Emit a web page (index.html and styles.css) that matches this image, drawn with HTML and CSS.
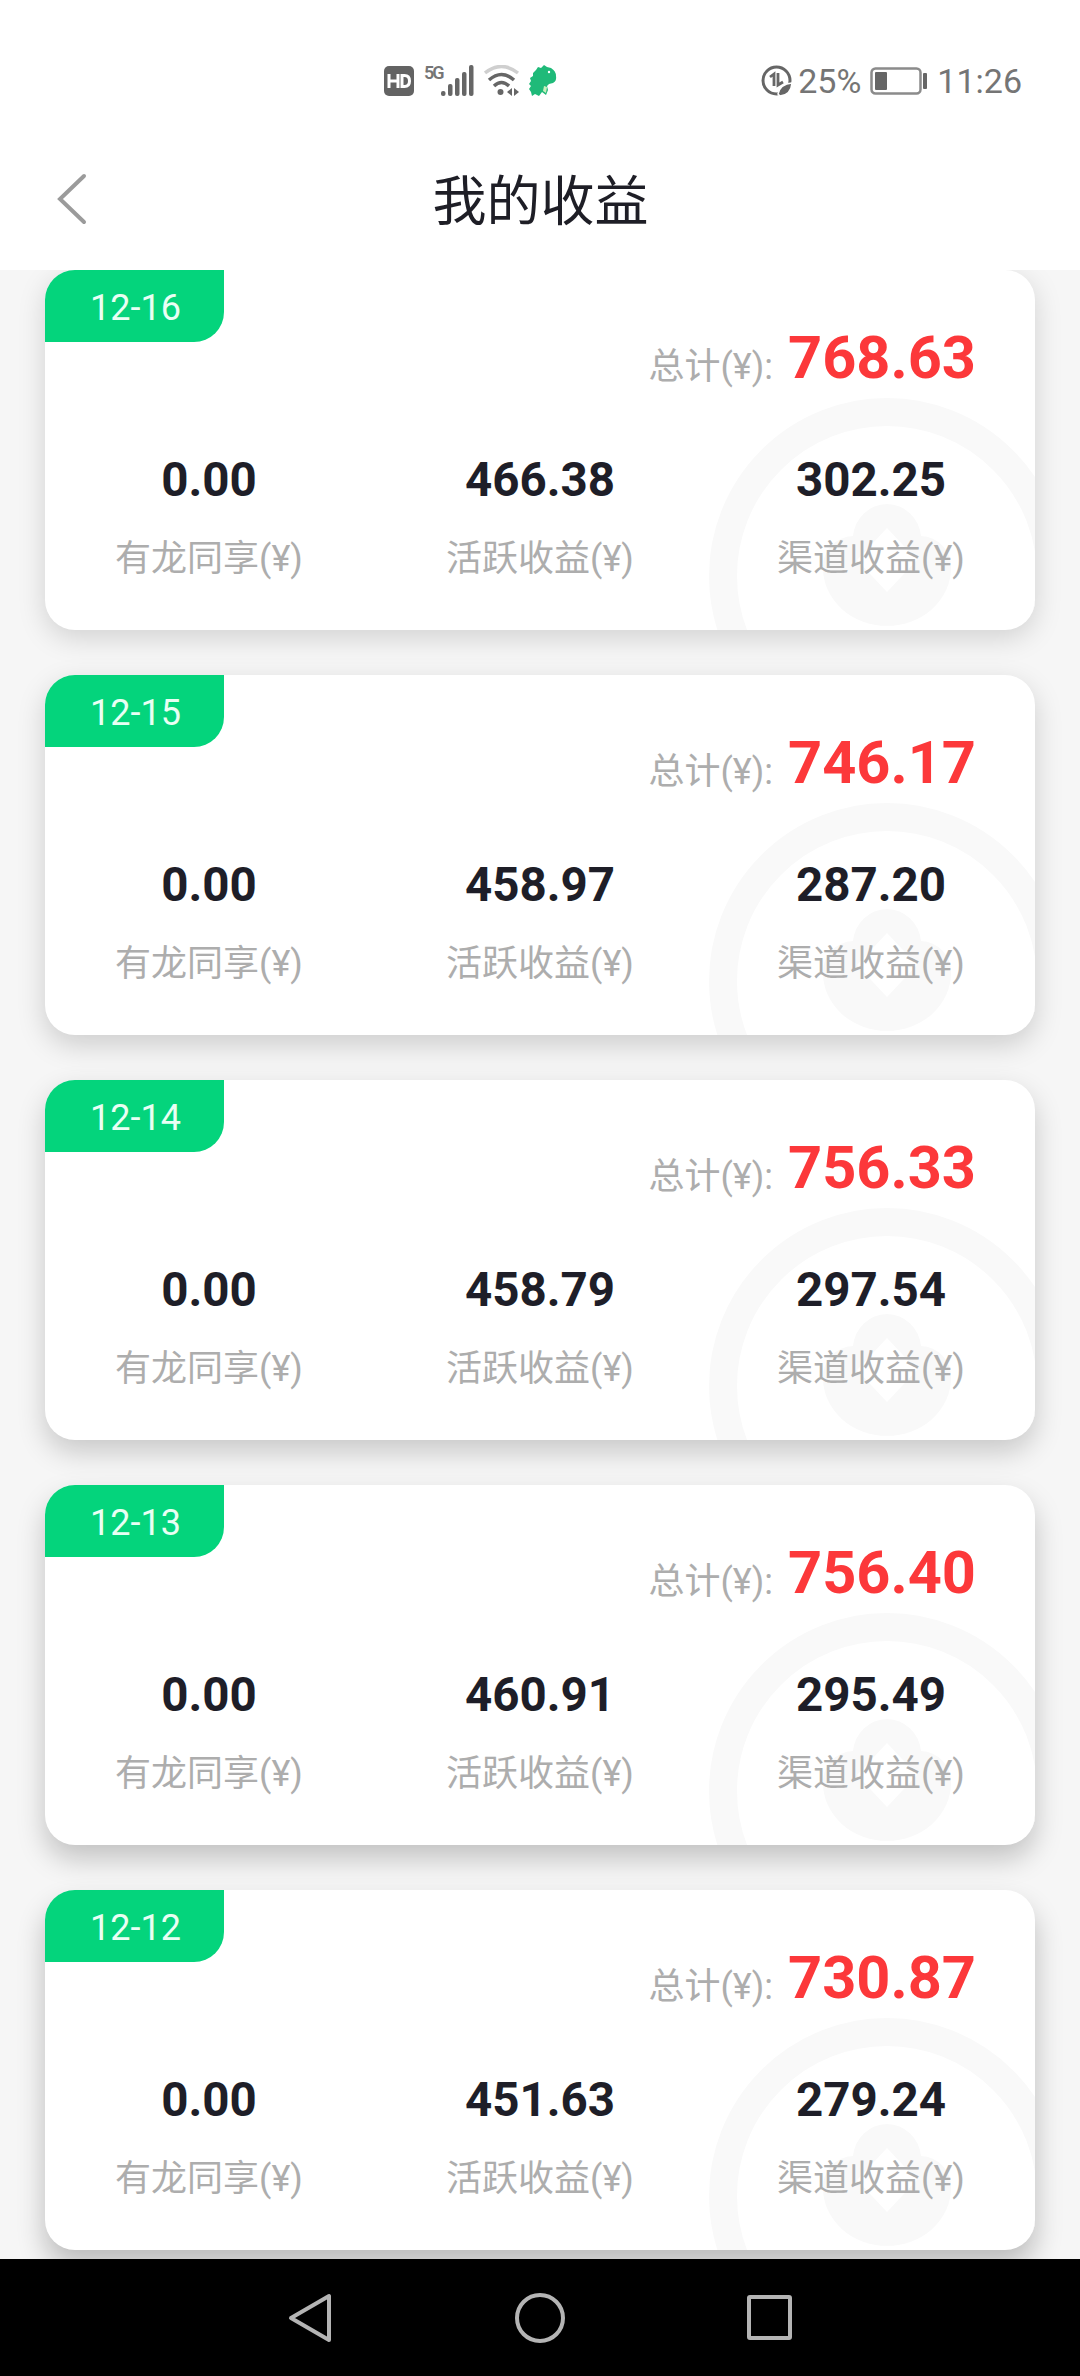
FILE: index.html
```html
<!DOCTYPE html>
<html lang="zh-CN">
<head>
  <meta charset="UTF-8" />
  <meta name="viewport" content="width=device-width, initial-scale=1.0" />
  <title>我的收益</title>
  <link rel="stylesheet" href="styles.css">
</head>
<body>
  <!-- Coin watermark shared by the cards -->
  <svg class="defs" width="0" height="0">
    <symbol id="coin" viewBox="0 0 328 234">
      <circle cx="180" cy="180" r="164" fill="none" stroke="#f9f9f9" stroke-width="28" />
      <path fill="#f9f9f9" fill-rule="evenodd" d="M180 108a35 35 0 0 1 34 32a31 31 0 0 1 30 32a62 56 0 0 1-128 0a31 31 0 0 1 30-32a35 35 0 0 1 34-32zM180 132l-30 32 30 32 30-32z" />
    </symbol>
  </svg>

  <div class="phone">
    <!-- Status bar -->
    <div class="status-bar">
      <div class="status-left">
        <svg class="icon-hd" width="30" height="30" viewBox="0 0 30 30">
          <rect width="30" height="30" rx="5" fill="#636363" />
          <path d="M5 8v14M14 8v14M5 15h9M18 9.500h2.500q5 0 5 5.500t-5 5.500H18z" fill="none" stroke="#fff" stroke-width="3" />
        </svg>
        <span class="net">5G</span>
        <svg class="icon-signal" width="33" height="32" viewBox="0 0 33 32" fill="#666">
          <rect x="0" y="26" width="4.500" height="5" rx="2" />
          <rect x="7" y="19" width="4.500" height="12" rx="2" />
          <rect x="14" y="13" width="4.500" height="18" rx="2" />
          <rect x="21" y="7" width="4.500" height="24" rx="2" />
          <rect x="28" y="0" width="4.500" height="31" rx="2" />
        </svg>
        <svg class="icon-wifi" width="36" height="32" viewBox="0 0 36 32" fill="none" stroke-width="3.500">
          <path d="M1 8Q17.500-5 34 8" stroke="#cfcfcf" />
          <path d="M5 15Q17.500 4 30 15" stroke="#666" />
          <path d="M10 21Q17.500 14 25 21" stroke="#666" />
          <circle cx="16.500" cy="27" r="3" fill="#666" />
          <path d="M28 23v8l-5-4zM30 23v8l5-4z" fill="#666" />
        </svg>
        <svg class="icon-dino" width="28" height="32" viewBox="0 0 28 32">
          <path fill="#1fba79" d="M7 5l2-3 3 1 3-3 3 2 4 1q5 3 5 8 1 5-3 7l-4 1-2 2 1 4-2 5-4-3-3 4-4-2-3 2-1-4-2-3 2-3-2-2 2-3-1-3 3-2 0-3z" />
          <circle cx="20" cy="7" r="1.200" fill="#fff" />
          <path fill="#c9efbd" d="M15 21l3 1-1 6-3-2z" />
        </svg>
      </div>
      <div class="status-right">
        <svg class="icon-data" width="32" height="32" viewBox="0 0 32 32">
          <circle cx="15.500" cy="15.500" r="13.500" fill="none" stroke="#666" stroke-width="3" />
          <path d="M9 12l4-3v12M17 8v12l5-3" fill="none" stroke="#666" stroke-width="2.800" />
          <path d="M17 29q2-10 14-11-1 12-12 13z" fill="#666" stroke="#fff" stroke-width="1.500" />
        </svg>
        <span class="percent">25%</span>
        <svg class="icon-battery" width="58" height="28" viewBox="0 0 58 28">
          <rect x="1.500" y="1.500" width="49" height="25" rx="4" fill="none" stroke="#8b8b8b" stroke-width="2.500" />
          <rect x="5" y="5" width="12" height="18" rx="1" fill="#666" />
          <rect x="53" y="6" width="4" height="16" rx="1" fill="#666" />
        </svg>
        <span class="clock">11:26</span>
      </div>
    </div>

    <!-- Title bar -->
    <div class="title-bar">
      <svg class="back" width="32" height="52" viewBox="0 0 32 52">
        <path d="M28 3L4 26l24 23" fill="none" stroke="#9b9b9b" stroke-width="4" stroke-linecap="round" />
      </svg>
      <h1>我的收益</h1>
    </div>

    <!-- Daily income -->
    <div class="list">
      <div class="card">
        <svg class="coin" width="328" height="234"><use href="#coin" /></svg>
        <div class="date">12-16</div>
        <div class="total"><span>总计(¥):</span><b>768.63</b></div>
        <div class="items">
          <div class="item"><b>0.00</b><span>有龙同享(¥)</span></div>
          <div class="item"><b>466.38</b><span>活跃收益(¥)</span></div>
          <div class="item"><b>302.25</b><span>渠道收益(¥)</span></div>
        </div>
      </div>
      <div class="card">
        <svg class="coin" width="328" height="234"><use href="#coin" /></svg>
        <div class="date">12-15</div>
        <div class="total"><span>总计(¥):</span><b>746.17</b></div>
        <div class="items">
          <div class="item"><b>0.00</b><span>有龙同享(¥)</span></div>
          <div class="item"><b>458.97</b><span>活跃收益(¥)</span></div>
          <div class="item"><b>287.20</b><span>渠道收益(¥)</span></div>
        </div>
      </div>
      <div class="card">
        <svg class="coin" width="328" height="234"><use href="#coin" /></svg>
        <div class="date">12-14</div>
        <div class="total"><span>总计(¥):</span><b>756.33</b></div>
        <div class="items">
          <div class="item"><b>0.00</b><span>有龙同享(¥)</span></div>
          <div class="item"><b>458.79</b><span>活跃收益(¥)</span></div>
          <div class="item"><b>297.54</b><span>渠道收益(¥)</span></div>
        </div>
      </div>
      <div class="card">
        <svg class="coin" width="328" height="234"><use href="#coin" /></svg>
        <div class="date">12-13</div>
        <div class="total"><span>总计(¥):</span><b>756.40</b></div>
        <div class="items">
          <div class="item"><b>0.00</b><span>有龙同享(¥)</span></div>
          <div class="item"><b>460.91</b><span>活跃收益(¥)</span></div>
          <div class="item"><b>295.49</b><span>渠道收益(¥)</span></div>
        </div>
      </div>
      <div class="card">
        <svg class="coin" width="328" height="234"><use href="#coin" /></svg>
        <div class="date">12-12</div>
        <div class="total"><span>总计(¥):</span><b>730.87</b></div>
        <div class="items">
          <div class="item"><b>0.00</b><span>有龙同享(¥)</span></div>
          <div class="item"><b>451.63</b><span>活跃收益(¥)</span></div>
          <div class="item"><b>279.24</b><span>渠道收益(¥)</span></div>
        </div>
      </div>
    </div>

    <!-- System navigation -->
    <div class="nav-bar">
      <svg width="50" height="52" viewBox="0 0 50 52"><path d="M44 4v44L6 26z" /></svg>
      <svg width="50" height="52" viewBox="0 0 50 52"><circle cx="25" cy="26" r="23" /></svg>
      <svg width="50" height="52" viewBox="0 0 50 52"><rect x="4" y="5" width="41" height="41" rx="1" /></svg>
    </div>
  </div>
</body>
</html>
```
FILE: styles.css
```css
/* Global styles */
* {
  box-sizing: border-box;
}
body {
  margin: 0;
  background: #f6f6f6;
  font-family: Roboto, "Noto Sans CJK SC", sans-serif;
  overflow: hidden;
}
.defs {
  position: absolute;
}
.phone {
  display: flex;
  flex-direction: column;
  width: 1080px;
  height: 2376px;
}
/* Status bar */
.status-bar {
  display: flex;
  justify-content: space-between;
  align-items: center;
  height: 160px;
  padding: 1px 58px 0 384px;
  background: #fff;
  color: #757575;
  font-size: 34px;
}
.status-left,
.status-right {
  display: flex;
  align-items: center;
}
.net {
  align-self: flex-start;
  width: 16px;
  margin: -1px 1px 0 10px;
  font-size: 18px;
  font-weight: 600;
  line-height: 18px;
  letter-spacing: -2px;
}
.icon-wifi {
  margin: 0 9px 0 10px;
}
.percent {
  margin: 0 9px 0 5px;
}
.clock {
  margin-left: 9px;
}
/* Title bar */
.title-bar {
  display: flex;
  align-items: center;
  height: 110px;
  padding: 0 56px 32px;
  background: #fff;
}
.title-bar h1 {
  flex: 1;
  margin: 8px 31px 0 0;
  text-align: center;
  font-size: 54px;
  font-weight: 400;
  line-height: 70px;
  color: #1e1e26;
}
/* Cards */
.list {
  flex: 1;
  display: flex;
  flex-direction: column;
  gap: 45px;
  min-height: 0;
  padding: 0 45px;
  overflow: hidden;
}
.card {
  position: relative;
  flex: none;
  height: 360px;
  background: #fff;
  border-radius: 30px;
  box-shadow: 0 8px 28px rgba(0,0,0,0.15);
}
.card:nth-child(2) { box-shadow: 0 10px 28px rgba(0,0,0,0.17); }
.card:nth-child(3) { box-shadow: 0 12px 28px rgba(0,0,0,0.19); }
.card:nth-child(4) { box-shadow: 0 14px 28px rgba(0,0,0,0.21); }
.card:nth-child(5) { box-shadow: 0 16px 28px rgba(0,0,0,0.24); }
.coin {
  position: absolute;
  right: 0;
  bottom: 0;
  overflow: hidden;
  border-bottom-right-radius: 30px;
}
.date {
  width: 179px;
  height: 72px;
  background: #04d47c;
  border-radius: 30px 0;
  color: #e9fff4;
  font-size: 36px;
  line-height: 77px;
  text-align: center;
  text-indent: 2px;
}
.total {
  position: relative;
  display: flex;
  justify-content: flex-end;
  align-items: baseline;
  height: 70px;
  margin-top: -19px;
  padding-right: 59px;
  line-height: 70px;
}
.total span,
.item span {
  color: #adadad;
  font-size: 36px;
}
.total span {
  position: relative;
  top: 1px;
}
.total b {
  margin-left: 15px;
  color: #fc383a;
  font-size: 59.5px;
}
/* Three income columns */
.items {
  position: relative;
  display: grid;
  grid-template-columns: repeat(3, 331px);
  justify-content: center;
  margin-top: 57px;
}
.item {
  display: flex;
  flex-direction: column;
  align-items: center;
}
.item b {
  color: #1e1e28;
  font-size: 47.5px;
  line-height: 60px;
}
.item span {
  margin-top: 21px;
  line-height: 56px;
}
/* System navigation */
.nav-bar {
  display: grid;
  grid-template-columns: repeat(3, 230px);
  justify-content: center;
  align-items: center;
  justify-items: center;
  height: 117px;
  background: #000;
}
.nav-bar svg {
  fill: none;
  stroke: #b4b4b4;
  stroke-width: 4;
  stroke-linejoin: round;
}
```
